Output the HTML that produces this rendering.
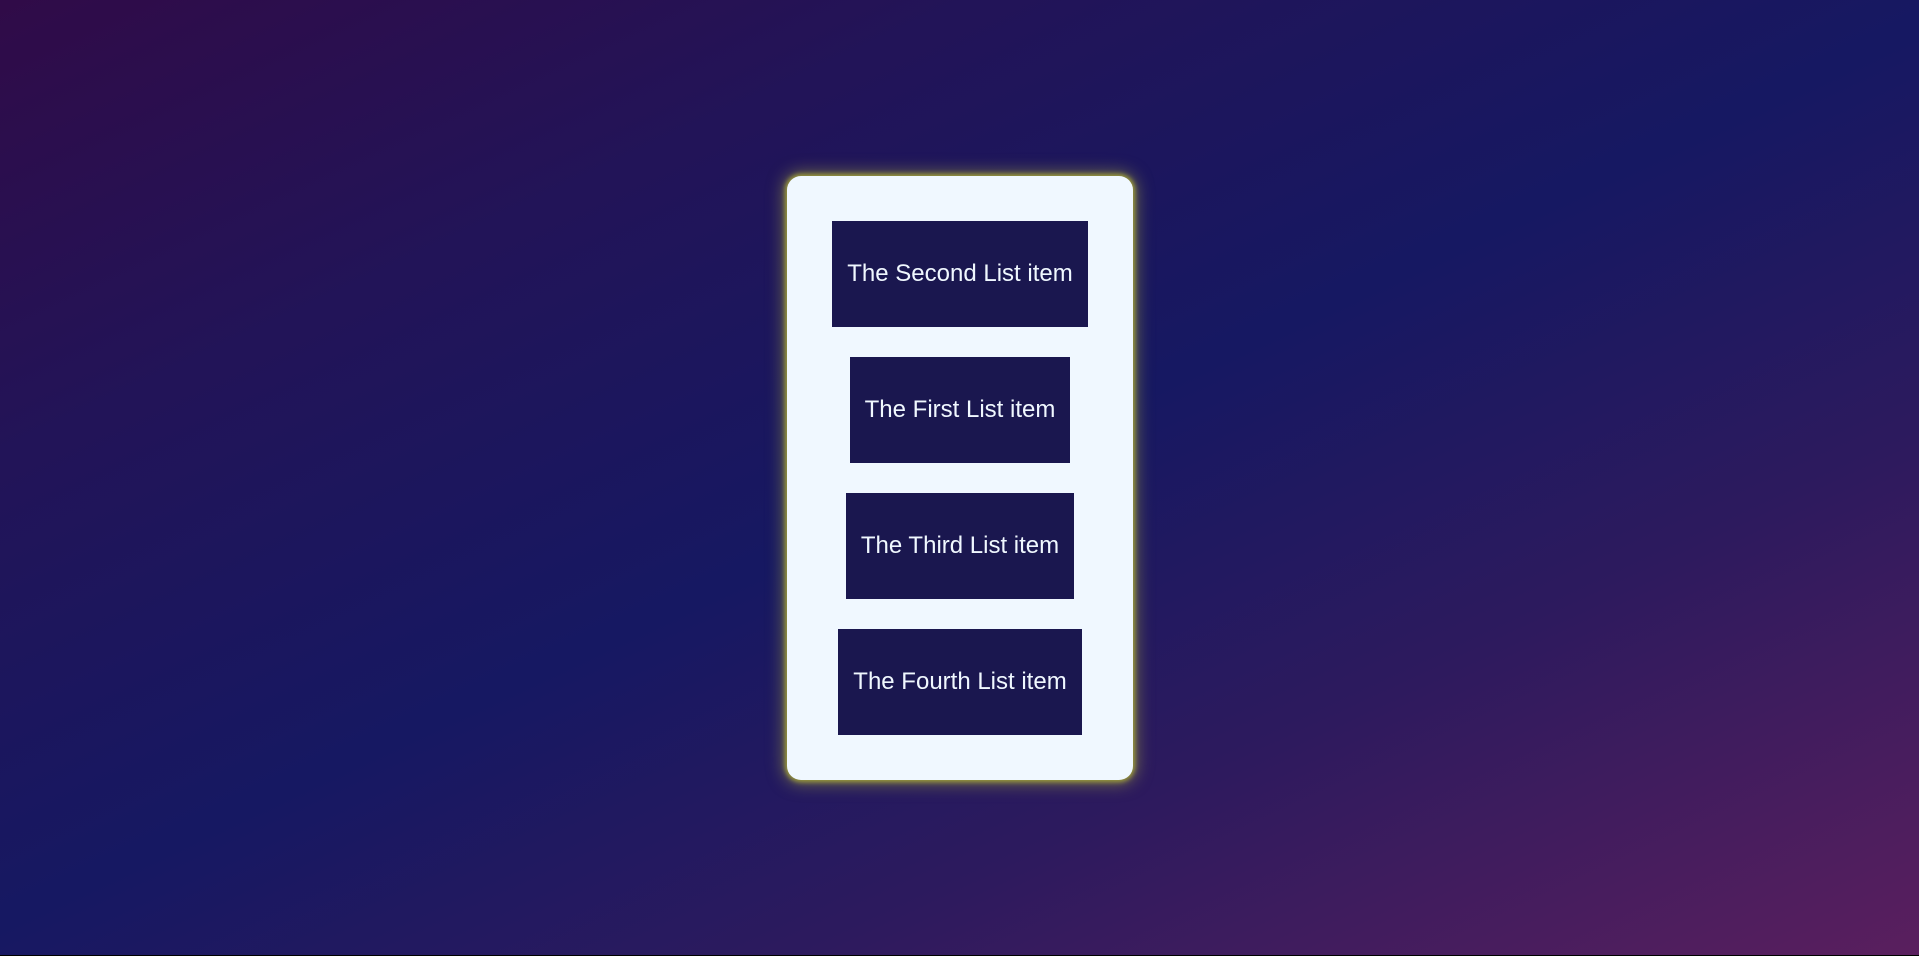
<!DOCTYPE html>
<html><head><style>
html,body{margin:0;padding:0;}
body{width:1919px;height:956px;overflow:hidden;position:relative;
background:linear-gradient(155deg,#300b48 0%,#221458 25%,#161862 50%,#2d1a5e 72%,#5a1f5e 100%);
font-family:"Liberation Sans",Arial,sans-serif;}
.bar{position:absolute;left:0;bottom:0;width:100%;height:1px;background:#000;}
.card{position:absolute;left:787px;top:176px;width:346px;height:604px;background:#f0f8ff;border-radius:14px;
box-shadow:0 0 5px 2px #9a9a3a,0 0 16px 4px rgba(170,170,60,.55);}
.it{position:absolute;height:106px;line-height:106px;background:#1a174f;color:#f0f8ff;font-size:24px;text-align:center;white-space:nowrap;}
</style></head><body>
<div class="card">
<div class="it" style="left:45px;top:45px;width:256px">The Second List item</div>
<div class="it" style="left:63px;top:181px;width:220px">The First List item</div>
<div class="it" style="left:59px;top:317px;width:228px">The Third List item</div>
<div class="it" style="left:51px;top:453px;width:244px">The Fourth List item</div>
</div>
<div class="bar"></div>
</body></html>
